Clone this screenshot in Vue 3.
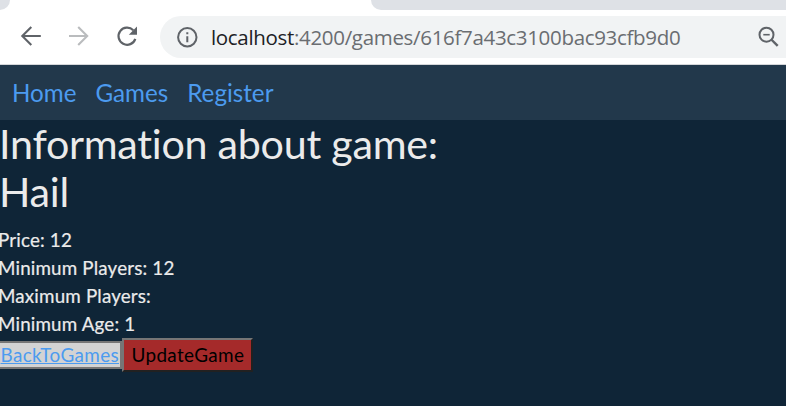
<script setup>
const links = ['Home', 'Games', 'Register']
const details = [
  { label: 'Price', value: '12' },
  { label: 'Minimum Players', value: '12' },
  { label: 'Maximum Players', value: '' },
  { label: 'Minimum Age', value: '1' },
]
</script>

<template>
  <div class="window">
    <div class="tabs">
      <div class="tab-prev"></div>
      <div class="tab-rest"></div>
    </div>
    <div class="toolbar">
      <svg class="icon back" width="24" height="24" viewBox="0 0 24 24" fill="none" stroke="#5f6368" stroke-width="2.1">
        <path d="M21.8 12H3.5M12.3 3L3.3 12l9 9" />
      </svg>
      <svg class="icon forward" width="24" height="24" viewBox="0 0 24 24" fill="none" stroke="#babcbe" stroke-width="2.1">
        <path d="M2 12h18M11.2 3l9 9-9 9" />
      </svg>
      <svg class="icon reload" width="24" height="24" viewBox="0 0 24 24">
        <path d="M20.3 14.8A8.6 8.6 0 1 1 18.3 6.2" fill="none" stroke="#5f6368" stroke-width="2.2" />
        <path d="M22 2.6v8.2h-8.2z" fill="#5f6368" />
      </svg>
      <div class="address">
        <svg class="info" width="22" height="22" viewBox="0 0 22 22">
          <circle cx="11.3" cy="11.3" r="9.2" fill="none" stroke="#5f6368" stroke-width="2" />
          <path d="M10.3 10.3h2v6h-2zM10.3 6.3h2v2h-2z" fill="#5f6368" />
        </svg>
        <div class="url"><span class="host">localhost</span>:4200/games/616f7a43c3100bac93cfb9d0</div>
        <svg class="zoom" width="22" height="22" viewBox="0 0 22 22" fill="none" stroke="#5f6368">
          <circle cx="8.5" cy="8.7" r="7" stroke-width="2" />
          <path d="M5.3 8.7h6.4" stroke-width="1.6" />
          <path d="M13.3 13.5l6.4 6.4" stroke-width="2.4" />
        </svg>
      </div>
    </div>
    <nav class="nav">
      <a v-for="link in links" :key="link">{{ link }}</a>
    </nav>
    <main class="page">
      <h1>Information about game:<br />Hail</h1>
      <p v-for="d in details" :key="d.label">{{ d.label }}: {{ d.value }}</p>
      <div class="actions">
        <button class="back-btn"><a>BackToGames</a></button>
        <button class="update-btn">UpdateGame</button>
      </div>
    </main>
  </div>
</template>

<style>
body {
  margin: 0;
  overflow: hidden;
}
</style>

<style scoped>
.window {
  width: 786px;
  height: 406px;
  overflow: hidden;
  display: flex;
  flex-direction: column;
  background: #0f2537;
  font-family: Lato, sans-serif;
  font-variant-ligatures: none;
}
.tabs {
  height: 10px;
  flex: none;
  display: flex;
  justify-content: space-between;
  background: #fff;
}
.tab-prev {
  width: 10px;
  background: #dee1e6;
  border-bottom-right-radius: 10px;
}
.tab-rest {
  width: 415px;
  background: #dee1e6;
  border-bottom-left-radius: 10px;
}
.toolbar {
  height: 55px;
  flex: none;
  box-sizing: border-box;
  padding: 6px 0 6px 19px;
  display: flex;
  align-items: flex-start;
  background: #fff;
  border-bottom: 1px solid #d5d7da;
}
.icon {
  flex: none;
  margin-top: 8px;
}
.forward {
  margin-left: 24px;
}
.reload {
  margin-left: 24px;
}
.address {
  flex: 1;
  height: 42px;
  margin-left: 21px;
  display: flex;
  align-items: center;
  background: #f1f3f4;
  border-radius: 21px 0 0 21px;
}
.info {
  flex: none;
  margin-left: 16px;
}
.url {
  width: 530px;
  margin-left: 13px;
  padding-bottom: 1px;
  flex: none;
  font-family: "Open Sans", "Noto Sans", sans-serif;
  font-size: 20.5px;
  line-height: 28px;
  letter-spacing: -0.32px;
  white-space: nowrap;
  color: #6a6d71;
}
.host {
  color: #202124;
}
.zoom {
  flex: none;
  margin-left: 17px;
}
.nav {
  height: 55px;
  flex: none;
  display: flex;
  gap: 19px;
  padding-left: 12px;
  background: #22384b;
  color: #4c9bef;
  font-size: 24.2px;
  line-height: 55px;
}
.page {
  color: #ebebeb;
}
h1 {
  margin: 0 0 10px -1px;
  font-size: 41.2px;
  font-weight: 400;
  line-height: 48px;
  height: 96px;
  letter-spacing: -0.25px;
  margin-top: -1px;
  margin-bottom: 11px;
}
p {
  margin: 0 0 0 -2px;
  height: 28px;
  font-size: 18.8px;
  line-height: 28px;
  letter-spacing: 0.17px;
  white-space: nowrap;
  -webkit-text-stroke: 0.2px #ebebeb;
}
.actions {
  display: flex;
  align-items: center;
  height: 34px;
}
button {
  box-sizing: border-box;
  margin: 0;
  font-family: inherit;
  font-size: 18.9px;
  line-height: 24px;
  letter-spacing: 0.35px;
  white-space: nowrap;
}
.back-btn {
  width: 122px;
  height: 28px;
  padding: 0 0 0 0.5px;
  border: 2px solid #767676;
  border-left: 0;
  background: #d3d3d3;
  color: #4c9bef;
  text-align: left;
}
.back-btn a {
  text-decoration: underline;
}
.update-btn {
  width: 131px;
  height: 34px;
  padding: 0 0 0 7.5px;
  border: 2px solid;
  border-color: #767676 #212121 #212121 #767676;
  background: #a52a2a;
  color: #000;
  text-align: left;
}
</style>
